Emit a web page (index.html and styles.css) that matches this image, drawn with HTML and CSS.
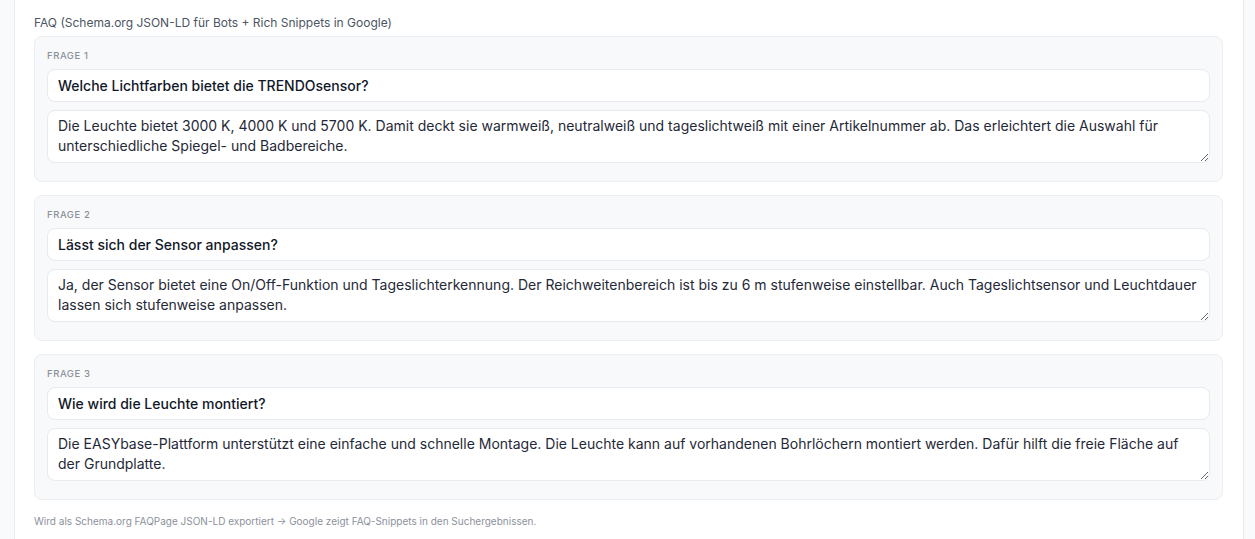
FILE: index.html
```html
<!DOCTYPE html>
<html lang="de">
<head>
  <meta charset="UTF-8" />
  <meta name="viewport" content="width=device-width, initial-scale=1.0"/>
  <title>FAQ Editor</title>
  <link rel="stylesheet" href="styles.css">
</head>
<body>
  <div class="panel">
    <div class="section-label">FAQ (Schema.org JSON-LD für Bots + Rich Snippets in Google)</div>

    <div class="faq-list">
      <!-- Frage 1 -->
      <div class="faq-card">
        <div class="faq-num">Frage 1</div>
        <input class="faq-question" type="text" value="Welche Lichtfarben bietet die TRENDOsensor?">
        <textarea class="faq-answer">Die Leuchte bietet 3000 K, 4000 K und 5700 K. Damit deckt sie warmweiß, neutralweiß und tageslichtweiß mit einer Artikelnummer ab. Das erleichtert die Auswahl für unterschiedliche Spiegel- und Badbereiche.</textarea>
      </div>

      <!-- Frage 2 -->
      <div class="faq-card">
        <div class="faq-num">Frage 2</div>
        <input class="faq-question" type="text" value="Lässt sich der Sensor anpassen?">
        <textarea class="faq-answer">Ja, der Sensor bietet eine On/Off-Funktion und Tageslichterkennung. Der Reichweitenbereich ist bis zu 6 m stufenweise einstellbar. Auch Tageslichtsensor und Leuchtdauer lassen sich stufenweise anpassen.</textarea>
      </div>

      <!-- Frage 3 -->
      <div class="faq-card">
        <div class="faq-num">Frage 3</div>
        <input class="faq-question" type="text" value="Wie wird die Leuchte montiert?">
        <textarea class="faq-answer">Die EASYbase-Plattform unterstützt eine einfache und schnelle Montage. Die Leuchte kann auf vorhandenen Bohrlöchern montiert werden. Dafür hilft die freie Fläche auf der Grundplatte.</textarea>
      </div>
    </div>

    <p class="hint">Wird als Schema.org FAQPage JSON-LD exportiert → Google zeigt FAQ-Snippets in den Suchergebnissen.</p>
  </div>
</body>
</html>
```

FILE: styles.css
```css
body {
  margin: 0;
  padding: 0;
  background: #f9fafb;
  font-family: Inter, 'Noto Sans', sans-serif;
  color: #111827;
  overflow: hidden;
}

.panel {
  margin: -1px 11px 0 14px;
  background: #fff;
  border: 1px solid #e8eaed;
  border-bottom: none;
  padding: 15px 20px 12px 19px;
}

.section-label {
  font-size: 12px;
  line-height: 16px;
  color: #4b5563;
  margin-bottom: 5px;
}

.faq-list {
  display: flex;
  flex-direction: column;
  gap: 13px;
}

.faq-card {
  background: #f8f9fa;
  border: 1px solid #eceef1;
  border-radius: 8px;
  padding: 12px 12px 18px;
  display: flex;
  flex-direction: column;
  gap: 8px;
}

.faq-num {
  font-size: 9.5px;
  line-height: 14px;
  font-weight: 500;
  text-transform: uppercase;
  letter-spacing: 0.06em;
  color: #8b919b;
  margin-bottom: -2px;
}

.faq-question,
.faq-answer {
  display: block;
  box-sizing: border-box;
  width: 100%;
  margin: 0;
  font-family: Inter, 'Noto Sans', sans-serif;
  font-size: 14px;
  line-height: 20px;
  color: #111827;
  background: #fff;
  border: 1px solid #e8eaed;
  border-radius: 8px;
  padding: 5px 10px;
  outline: none;
}

.faq-question {
  height: 33px;
  font-weight: 500;
}

.faq-answer {
  height: 53px;
  resize: vertical;
  overflow: hidden;
  color: #1f2937;
}

.hint {
  margin: 14px 0 0;
  font-size: 10px;
  line-height: 14px;
  color: #8b919b;
}
```
